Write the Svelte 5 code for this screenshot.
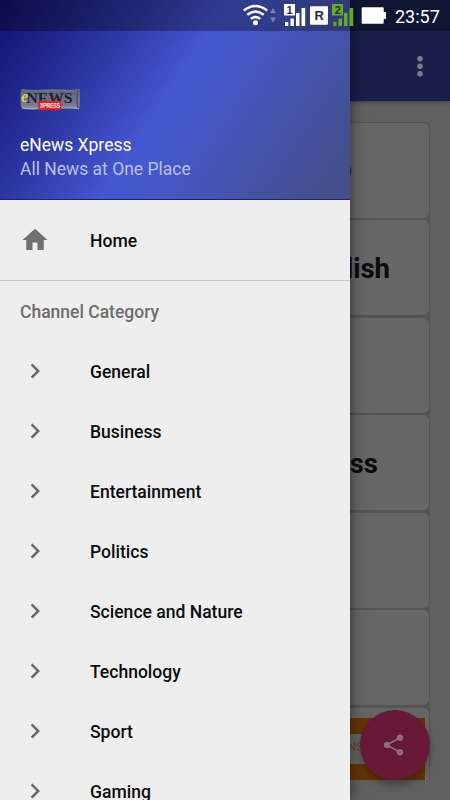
<script>
  const categories = ['General', 'Business', 'Entertainment', 'Politics', 'Science and Nature', 'Technology', 'Sport', 'Gaming'];
  const channels = [
    { name: 'NDTV HD', inset: 77 },
    { name: 'News English', inset: 39 },
    { name: '', inset: 0 },
    { name: 'Express', inset: 51 },
    { name: '', inset: 0 },
    { name: '', inset: 0 }
  ];
</script>

<div class="screen">
  <div class="content">
    <div class="toolbar">
      <svg class="more" width="10" height="24" viewBox="0 0 10 24" fill="#777a8c">
        <circle cx="5" cy="4.8" r="2.8" /><circle cx="5" cy="12.2" r="2.8" /><circle cx="5" cy="19.8" r="2.8" />
      </svg>
    </div>
    <div class="list">
      {#each channels as c}
        <div class="card" style="padding-right: {c.inset}px">{c.name}</div>
      {/each}
      <div class="card last"><div class="banner"><span>NS</span></div></div>
    </div>
    <div class="fab">
      <svg width="24" height="26" viewBox="0 0 24 26">
        <path d="M18 5.7 5 13l13 7.3" fill="none" stroke="#471527" stroke-width="3.6" />
        <g fill="#98677a" stroke="#471527" stroke-width="1"><circle cx="18" cy="5.7" r="3.9" /><circle cx="5" cy="13" r="3.9" /><circle cx="18" cy="20.3" r="3.9" /></g>
        <path d="M18 5.7 5 13l13 7.3" fill="none" stroke="#98677a" stroke-width="1.9" />
      </svg>
    </div>
  </div>

  <div class="drawer">
    <div class="header">
      <svg class="logo" width="62" height="24" viewBox="0 0 62 24">
        <defs>
          <linearGradient id="paper" x1="0" y1="0" x2="0" y2="1">
            <stop offset="0" stop-color="#777c92" /><stop offset=".15" stop-color="#62677f" /><stop offset=".75" stop-color="#74798f" /><stop offset="1" stop-color="#9295a1" />
          </linearGradient>
        </defs>
        <path d="M2 1q8 1.5 20 .7T52 2l7-1q1.5 1 1 10t-1 10l-7-.8q-20-.8-30 .5T3 21Q0 20 .5 10 .5 2 2 1z" fill="url(#paper)" />
        <path d="M58 2q-2 9 0 18" fill="none" stroke="#4b5067" stroke-width="1.5" />
        <path d="M2 20q10 1.5 20 .5M40 20h12l7 .7" fill="none" stroke="#b5b5b5" stroke-width=".8" />
        <text x="6.5" y="14.5" textLength="46" lengthAdjust="spacingAndGlyphs" class="news">NEWS</text>
        <text x="1" y="14" class="e">e</text>
        <rect x="18.3" y="12.8" width="23" height="9.5" rx="2.5" fill="#e51b20" />
        <text x="20" y="20" textLength="20" lengthAdjust="spacingAndGlyphs" class="xp">XPRESS</text>
      </svg>
      <div class="title">eNews Xpress</div>
      <div class="subtitle">All News at One Place</div>
    </div>
    <div class="row home">
      <svg width="30" height="30" viewBox="0 0 24 24" fill="#707070"><path d="M10 20v-6h4v6h5v-8h3L12 3 2 12h3v8z" /></svg>
      <span>Home</span>
    </div>
    <div class="section">Channel Category</div>
    {#each categories as category}
      <div class="row">
        <svg class="chevron" width="30" height="30" viewBox="0 0 24 24" fill="#686868"><path d="M10 6 8.59 7.41 13.17 12l-4.58 4.59L10 18l6-6z" /></svg>
        <span>{category}</span>
      </div>
    {/each}
  </div>

  <div class="status">
    <svg width="150" height="31" viewBox="0 0 150 31">
      <g fill="none" stroke="#fff" stroke-width="2.4">
        <path d="M3.8 10.5q11.7-9 23.4 0" /><path d="M7.3 14.8q8.2-6.5 16.4 0" /><path d="M10.8 18.9q4.7-3.8 9.4 0" />
      </g>
      <circle cx="15.5" cy="22.8" r="2.5" fill="#fff" />
      <path d="M30 13l3-5 3 5zM30 17.5h6l-3 5z" fill="#7b80b0" />
      <g fill="#fff">
        <path d="M44 4h11v11.5H44zM45 22h3.3v4H45zM50.5 18.5h3.4V26h-3.4zM56 13h3.5v13H56zM61.5 8h3.7v18h-3.7z" />
        <rect x="70" y="6.3" width="18" height="18.5" rx="1" />
        <rect x="121.7" y="7.3" width="22" height="16.5" rx="1" />
        <rect x="143" y="12" width="3" height="7" />
      </g>
      <path d="M92 4h11v11.5H92zM93.5 22h3v4h-3zM98.5 18.5h3.5V26h-3.5zM104 13h3.5v13H104zM109.5 8h3.7v18h-3.7z" fill="#62ad20" />
      <g class="glyphs"><text x="46.5" y="13.5">1</text><text x="94.7" y="13.5">2</text><text x="74.5" y="20.2" class="r">R</text></g>
    </svg>
    <span class="time">23:57</span>
  </div>
</div>

<style>
  :global(body) { margin: 0; }
  .screen { position: relative; width: 450px; height: 800px; overflow: hidden; background: #606060; font-family: Roboto, sans-serif; }
  .content { position: relative; height: 800px; overflow: hidden; }
  .toolbar { box-sizing: border-box; height: 101px; padding: 54px 25px 0 0; display: flex; justify-content: flex-end; align-items: flex-start; background: #181f49; box-shadow: 0 1px 4px rgba(0,0,0,.4); }
  .list { display: flex; flex-direction: column; gap: 2.5px; margin: 20.5px 20px 0; padding: 1px 1px 0 0; height: 657.5px; overflow: hidden; background: #545454; border-radius: 5px 5px 0 0; }
  .card { flex: 0 0 95px; box-sizing: border-box; display: flex; align-items: center; justify-content: flex-end; padding-top: 2px; background: #666; border-radius: 6px; color: #0b0b0b; font-size: 27.5px; font-weight: 700; white-space: nowrap; }
  .last { align-items: flex-start; padding: 10px 4px 0; }
  .banner { width: 100%; height: 62px; box-sizing: border-box; background: #653606; padding-top: 16px; }
  .banner span { display: block; height: 30px; box-sizing: border-box; margin-right: 8px; padding-right: 53px; background: #696969; color: #6b451d; text-align: right; font-size: 13px; font-weight: 400; line-height: 26px; }
  .fab { position: absolute; left: 360px; top: 710px; width: 70px; height: 70px; border-radius: 50%; background: #681937; display: flex; align-items: center; justify-content: center; box-shadow: 0 5px 9px rgba(0,0,0,.35); }
  .fab svg { margin: 0 3px 1px 0; }
  .drawer { position: absolute; left: 0; top: 0; width: 350px; height: 800px; overflow: hidden; background: #eee; box-shadow: 0 0 14px rgba(0,0,0,.55); }
  .header { box-sizing: border-box; height: 200px; padding: 88px 20px 0; border-bottom: 1px solid #17257e; background: linear-gradient(123deg, #101268 0%, #191e80 10%, #2c37a2 28%, #4557d1 48.5%, #4558c9 55%, #4553aa 75%, #444e84 100%); }
  .logo { display: block; margin-left: -.5px; }
  .news { font: 700 15.5px "Liberation Serif", serif; fill: #1c2030; }
  .e { font: italic 700 16px "Liberation Serif", serif; fill: #dfd33b; }
  .xp { font: 700 7px "Liberation Sans", sans-serif; fill: #fff; }
  .title, .subtitle { font-size: 17.5px; line-height: 24px; white-space: nowrap; }
  .title { margin-top: 21px; color: #fff; }
  .subtitle { color: #b8c0ed; }
  .row { height: 60px; display: flex; align-items: center; padding-left: 20px; gap: 40px; font-size: 17.55px; font-weight: 500; color: #0c0c0c; white-space: nowrap; }
  .home { height: 80px; border-bottom: 1px solid #c6c6c6; }
  .home span { padding-top: 2px; }
  .chevron { margin-bottom: 2px; }
  .section { height: 61px; line-height: 63px; padding-left: 20px; font-size: 17.5px; font-weight: 500; color: #6d6d6d; }
  .status { position: absolute; left: 0; top: 0; width: 450px; height: 31px; display: flex; background: rgba(0,0,0,.3); }
  .status svg { margin-left: 240px; flex: none; }
  .time { margin-left: 5px; color: #fff; font-size: 18px; line-height: 33px; }
  .glyphs { font: 700 11px "Liberation Sans", sans-serif; fill: #20264f; }
  .r { font-size: 13px; }
</style>
